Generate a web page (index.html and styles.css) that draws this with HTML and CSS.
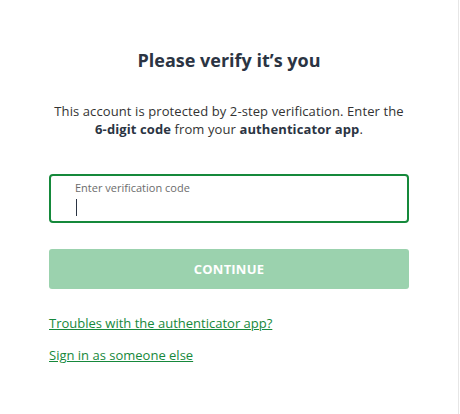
FILE: index.html
```html
<!DOCTYPE html>
<html lang="en">
<head>
    <meta charset="UTF-8">
    <meta name="viewport" content="width=device-width, initial-scale=1.0">
    <title>Please verify it's you</title>
    <link rel="stylesheet" href="styles.css">
</head>
<body>

    <div class="page">
        <div class="panel">
            <h1>Please verify it’s you</h1>

            <p class="intro">
                This account is protected by 2-step verification. Enter the<br>
                <b>6-digit code</b> from your <b>authenticator app</b>.
            </p>

            <div class="field">
                <label>Enter verification code</label>
                <span class="caret"></span>
            </div>

            <button type="button" class="continue" disabled>CONTINUE</button>

            <a href="#" class="link">Troubles with the authenticator app?</a>
            <a href="#" class="link">Sign in as someone else</a>
        </div>
    </div>

</body>
</html>
```

FILE: styles.css
```css
body {
    margin: 0;
    padding: 0;
    background: #fff;
    font-family: "Open Sans", Lato, Arial, sans-serif;
    color: #333;
}

.page {
    width: 458px;
    height: 414px;
    border-right: 1px solid #e6e6e6;
}

.panel {
    width: 360px;
    margin: 0 auto;
    padding-top: 48px;
    display: flex;
    flex-direction: column;
}

h1 {
    margin: 0;
    font-size: 18px;
    font-weight: 700;
    line-height: 24px;
    text-align: center;
    color: #2b3443;
}

.intro {
    margin: 30px 0 0;
    font-size: 13px;
    line-height: 18px;
    letter-spacing: 0.1px;
    text-align: center;
    color: #333;
}

.intro b {
    color: #2b3443;
}

.field {
    box-sizing: border-box;
    margin-top: 36px;
    height: 49px;
    border: 2px solid #15893b;
    border-radius: 4px;
    padding: 5px 0 0 24px;
    display: flex;
    flex-direction: column;
}

.field label {
    font-size: 11px;
    line-height: 14px;
    color: #6c6c6c;
}

.caret {
    width: 1px;
    height: 17px;
    margin: 4px 0 0 1px;
    background: #2b3443;
}

.continue {
    margin-top: 26px;
    height: 40px;
    border: none;
    border-radius: 3px;
    background-color: #9bd2ae;
    color: #fff;
    font-family: inherit;
    font-size: 13px;
    font-weight: 700;
    letter-spacing: 0.2px;
}

.link {
    margin-top: 26px;
    align-self: flex-start;
    font-size: 13px;
    line-height: 16px;
    color: #16883b;
    text-decoration: underline;
}

.link + .link {
    margin-top: 16px;
}
```
